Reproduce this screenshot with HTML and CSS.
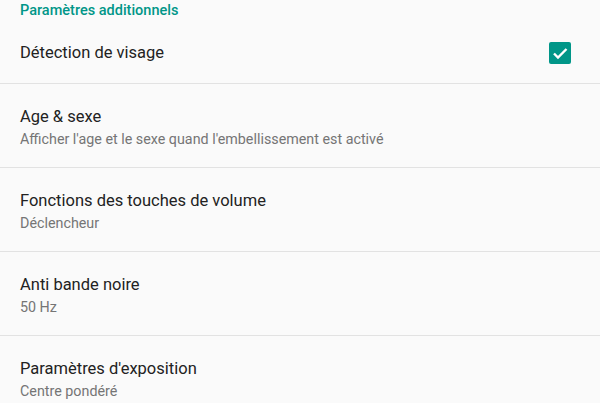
FILE: index.html
```html
<!DOCTYPE html>
<html lang="fr">
<head>
    <meta charset="UTF-8">
    <title>Paramètres</title>
    <link rel="stylesheet" href="styles.css">
</head>
<body>
    <div class="category">Paramètres additionnels</div>

    <div class="pref first">
        <div class="text">
            <div class="title">Détection de visage</div>
        </div>
        <div class="check">
            <svg width="22" height="22" viewBox="0 0 22 22">
                <rect x="0" y="0" width="22" height="22" rx="2" fill="#009688"/>
                <path d="M5 11.5 L9 15.5 L17.5 7" fill="none" stroke="#fff" stroke-width="2.4"/>
            </svg>
        </div>
    </div>

    <div class="pref">
        <div class="text">
            <div class="title">Age &amp; sexe</div>
            <div class="summary">Afficher l'age et le sexe quand l'embellissement est activé</div>
        </div>
    </div>

    <div class="pref">
        <div class="text">
            <div class="title">Fonctions des touches de volume</div>
            <div class="summary">Déclencheur</div>
        </div>
    </div>

    <div class="pref">
        <div class="text">
            <div class="title">Anti bande noire</div>
            <div class="summary">50 Hz</div>
        </div>
    </div>

    <div class="pref">
        <div class="text">
            <div class="title">Paramètres d'exposition</div>
            <div class="summary">Centre pondéré</div>
        </div>
    </div>
</body>
</html>
```

FILE: styles.css
```css
body {
    margin: 0;
    background: #fafafa;
    font-family: Roboto, "Noto Sans", Arial, sans-serif;
    overflow: hidden;
}
.category {
    height: 22px;
    line-height: 22px;
    padding: 0 20px;
    color: #009688;
    font-size: 14.5px;
    font-weight: 500;
}
.pref {
    display: flex;
    align-items: center;
    height: 83px;
    padding: 0 29px 0 20px;
    border-bottom: 1px solid #e2e2e2;
}
.pref.first {
    height: 61px;
}
.text {
    flex: 1;
    padding-top: 3px;
}
.pref.first .text {
    padding-top: 0;
}
.title {
    font-size: 16.5px;
    line-height: 22px;
    color: #222;
}
.summary {
    padding-top: 1px;
    font-size: 14.3px;
    line-height: 20px;
    color: #757575;
}
.check {
    width: 22px;
    height: 22px;
}
.check svg {
    display: block;
}
```
